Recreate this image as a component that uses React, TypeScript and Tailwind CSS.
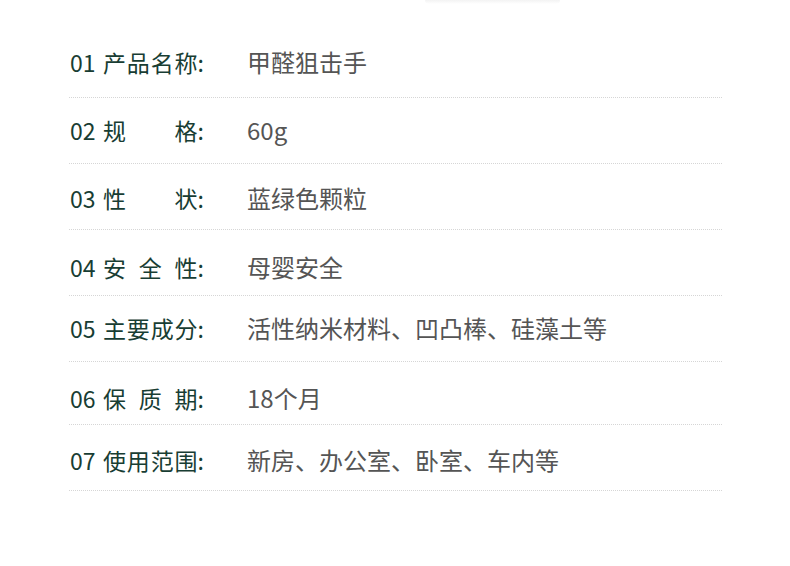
const rows = [
  { no: '01', label: ['产', '品', '名', '称:'], value: '甲醛狙击手', cls: 'pt-[42px] pb-[19px]' },
  { no: '02', label: ['规', '格:'], value: '60g', cls: 'pt-[16px] pb-[17px]' },
  { no: '03', label: ['性', '状:'], value: '蓝绿色颗粒', cls: 'pt-[18px] pb-[15px]' },
  { no: '04', label: ['安', '全', '性:'], value: '母婴安全', cls: 'pt-[21px] pb-[12px]' },
  { no: '05', label: ['主', '要', '成', '分:'], value: '活性纳米材料、凹凸棒、硅藻土等', cls: 'pt-[16px] pb-[17px]' },
  { no: '06', label: ['保', '质', '期:'], value: '18个月', cls: 'pt-[20px] pb-[10px]' },
  { no: '07', label: ['使', '用', '范', '围:'], value: '新房、办公室、卧室、车内等', cls: 'pt-[19px] pb-[14px]' },
];

export default function App() {
  return (
    <div
      className="w-[790px] h-[566px] bg-white overflow-hidden"
      style={{ fontFamily: '"Noto Sans CJK SC", "Noto Sans", sans-serif' }}
    >
      {/* faint edge of the block above */}
      <div className="ml-[425px] w-[135px] h-[4px] rounded-b-full bg-gradient-to-b from-[#f3f3f3] to-white" />

      <div className="ml-[69px] w-[653px]">
        {rows.map((r) => (
          <div
            key={r.no}
            className={`flex items-center border-b border-dotted border-[#d6d6d6] text-[23px] leading-[32px] ${r.cls}`}
          >
            <span className="w-[34px] pl-[1px] text-[#183d33]">{r.no}</span>
            <span className="flex w-[101px] justify-between text-[#183d33]">
              {r.label.map((c) => (
                <span key={c}>{c}</span>
              ))}
            </span>
            <span className="ml-[43px] text-[24px] text-[#555555]">{r.value}</span>
          </div>
        ))}
      </div>
    </div>
  );
}
